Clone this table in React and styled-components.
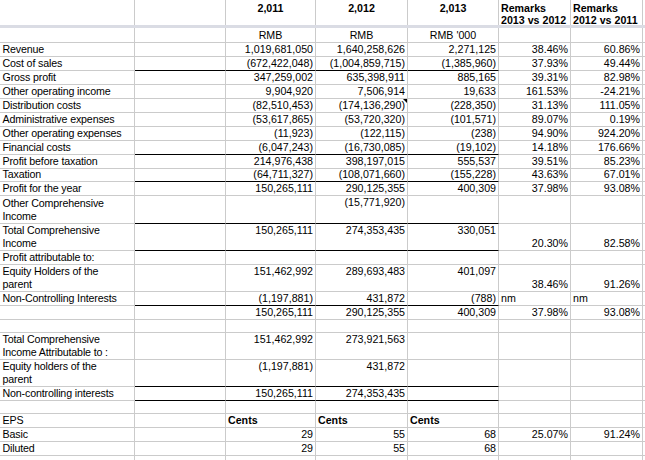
import React from "react";
import styled, { createGlobalStyle } from "styled-components";

const GlobalStyle = createGlobalStyle`
  html, body { margin: 0; padding: 0; background: #ffffff; }
  body {
    font-family: "Liberation Sans", Arial, sans-serif;
    font-size: 10.67px;
    color: #000000;
  }
`;

const GRID = "#cbcbcb";

const Sheet = styled.div`
  width: 645px;
  height: 460px;
  overflow: hidden;
  background: #ffffff;
`;

const Row = styled.div`
  display: grid;
  grid-template-columns: 135px 91px 90px 92px 91px 72px 72px 1fr;
  grid-template-rows: ${(p) => p.$h}px;
  height: ${(p) => p.$h}px;
`;

const Band = styled.div`
  height: 3px;
  background: #dadce4;
`;

const Cell = styled.div`
  position: relative;
  box-sizing: border-box;
  min-width: 0;
  height: 100%;
  border-right: 1px solid ${GRID};
  border-bottom: ${(p) => (p.$open ? "none" : `1px solid ${p.$rule ? "#000000" : GRID}`)};
  display: flex;
  flex-direction: column;
  justify-content: ${(p) => (p.$top ? "flex-start" : "flex-end")};
  padding: ${(p) => (p.$label ? "0 2px 0 2.5px" : "0 2px")};
  white-space: nowrap;
`;

const Text = styled.span`
  display: block;
  line-height: 13px;
  text-align: ${(p) => p.$align || "right"};
  font-weight: ${(p) => (p.$bold ? 700 : 400)};
  letter-spacing: ${(p) => (p.$label ? "-0.15px" : "0")};
`;

const HeadCell = styled.div`
  box-sizing: border-box;
  border-right: 1px solid ${GRID};
  padding: 1.5px 2px 0;
  white-space: nowrap;
  font-weight: 700;
  line-height: 12px;
  text-align: ${(p) => p.$align || "center"};
`;

const CommentMark = styled.span`
  position: absolute;
  top: 0;
  right: 0;
  width: 0;
  height: 0;
  border-top: 4px solid #000000;
  border-left: 4px solid transparent;
`;

const rows = [
  { h: 15, label: "", vals: [{ t: "RMB", a: "center" }, { t: "RMB", a: "center" }, { t: "RMB '000", a: "center" }], pct: ["", ""] },
  { h: 14, label: "Revenue", vals: ["1,019,681,050", "1,640,258,626", "2,271,125"], pct: ["38.46%", "60.86%"] },
  { h: 14, label: "Cost of sales", vals: ["(672,422,048)", "(1,004,859,715)", "(1,385,960)"], pct: ["37.93%", "49.44%"], rule: true },
  { h: 14, label: "Gross profit", vals: ["347,259,002", "635,398,911", "885,165"], pct: ["39.31%", "82.98%"] },
  { h: 14, label: "Other operating income", vals: ["9,904,920", "7,506,914", "19,633"], pct: ["161.53%", "-24.21%"] },
  { h: 14, label: "Distribution costs", vals: ["(82,510,453)", { t: "(174,136,290)", mark: true }, "(228,350)"], pct: ["31.13%", "111.05%"] },
  { h: 14, label: "Administrative expenses", vals: ["(53,617,865)", "(53,720,320)", "(101,571)"], pct: ["89.07%", "0.19%"] },
  { h: 14, label: "Other operating expenses", vals: ["(11,923)", "(122,115)", "(238)"], pct: ["94.90%", "924.20%"] },
  { h: 14, label: "Financial costs", vals: ["(6,047,243)", "(16,730,085)", "(19,102)"], pct: ["14.18%", "176.66%"], rule: true },
  { h: 14, label: "Profit before taxation", vals: ["214,976,438", "398,197,015", "555,537"], pct: ["39.51%", "85.23%"] },
  { h: 13, label: "Taxation", vals: ["(64,711,327)", "(108,071,660)", "(155,228)"], pct: ["43.63%", "67.01%"], rule: true },
  { h: 14, label: "Profit for the year", vals: ["150,265,111", "290,125,355", "400,309"], pct: ["37.98%", "93.08%"] },
  { h: 28, label: ["Other Comprehensive", "Income"], vals: ["", "(15,771,920)", ""], pct: ["", ""], rule: true, tall: true },
  { h: 27, label: ["Total Comprehensive", "Income"], vals: ["150,265,111", "274,353,435", "330,051"], pct: ["20.30%", "82.58%"], rule: true, tall: true },
  { h: 14, label: "Profit attributable to:", vals: ["", "", ""], pct: ["", ""] },
  { h: 27, label: ["Equity Holders of the", "parent"], vals: ["151,462,992", "289,693,483", "401,097"], pct: ["38.46%", "91.26%"], tall: true },
  { h: 14, label: "Non-Controlling Interests", vals: ["(1,197,881)", "431,872", "(788)"], pct: [{ t: "nm", a: "left" }, { t: "nm", a: "left" }], rule: true },
  { h: 14, label: "", vals: ["150,265,111", "290,125,355", "400,309"], pct: ["37.98%", "93.08%"] },
  { h: 13, label: "", vals: ["", "", ""], pct: ["", ""] },
  { h: 27, label: ["Total Comprehensive", "Income Attributable to :"], vals: ["151,462,992", "273,921,563", ""], pct: ["", ""], tall: true },
  { h: 27, label: ["Equity holders of the", "parent"], vals: ["(1,197,881)", "431,872", ""], pct: ["", ""], tall: true, rule: true },
  { h: 14, label: "Non-controlling interests", vals: ["150,265,111", "274,353,435", ""], pct: ["", ""], rule: true },
  { h: 13, label: "", vals: ["", "", ""], pct: ["", ""] },
  { h: 14, label: "EPS", vals: [{ t: "Cents", a: "left", b: true }, { t: "Cents", a: "left", b: true }, { t: "Cents", a: "left", b: true }], pct: ["", ""] },
  { h: 14, label: "Basic", vals: ["29", "55", "68"], pct: ["25.07%", "91.24%"] },
  { h: 14, label: "Diluted", vals: ["29", "55", "68"], pct: ["", ""] },
];

const norm = (v) => (typeof v === "string" ? { t: v } : v);

function Label({ label }) {
  if (Array.isArray(label)) {
    return (
      <Text $align="left" $label>
        {label[0]}
        <br />
        {label[1]}
      </Text>
    );
  }
  return (
    <Text $align="left" $label>
      {label}
    </Text>
  );
}

function DataRow({ row }) {
  return (
    <Row $h={row.h}>
      <Cell $label>
        <Label label={row.label} />
      </Cell>
      <Cell $rule={row.rule} />
      {row.vals.map((v, i) => {
        const c = norm(v);
        return (
          <Cell key={"v" + i} $rule={row.rule} $top={row.tall}>
            {c.mark && <CommentMark />}
            <Text $align={c.a} $bold={c.b}>
              {c.t}
            </Text>
          </Cell>
        );
      })}
      {row.pct.map((v, i) => {
        const c = norm(v);
        return (
          <Cell key={"p" + i}>
            <Text $align={c.a}>{c.t}</Text>
          </Cell>
        );
      })}
      <Cell />
    </Row>
  );
}

export default function App() {
  return (
    <>
      <GlobalStyle />
      <Sheet>
        <Row $h={25}>
          <HeadCell />
          <HeadCell />
          <HeadCell>2,011</HeadCell>
          <HeadCell>2,012</HeadCell>
          <HeadCell>2,013</HeadCell>
          <HeadCell $align="left">
            Remarks
            <br />
            2013 vs 2012
          </HeadCell>
          <HeadCell $align="left">
            Remarks
            <br />
            2012 vs 2011
          </HeadCell>
          <HeadCell />
        </Row>
        <Band />
        {rows.map((r, i) => (
          <DataRow key={i} row={r} />
        ))}
        <Row $h={10}>
          <Cell $open />
          <Cell $open />
          <Cell $open />
          <Cell $open />
          <Cell $open />
          <Cell $open />
          <Cell $open />
          <Cell $open />
        </Row>
      </Sheet>
    </>
  );
}
